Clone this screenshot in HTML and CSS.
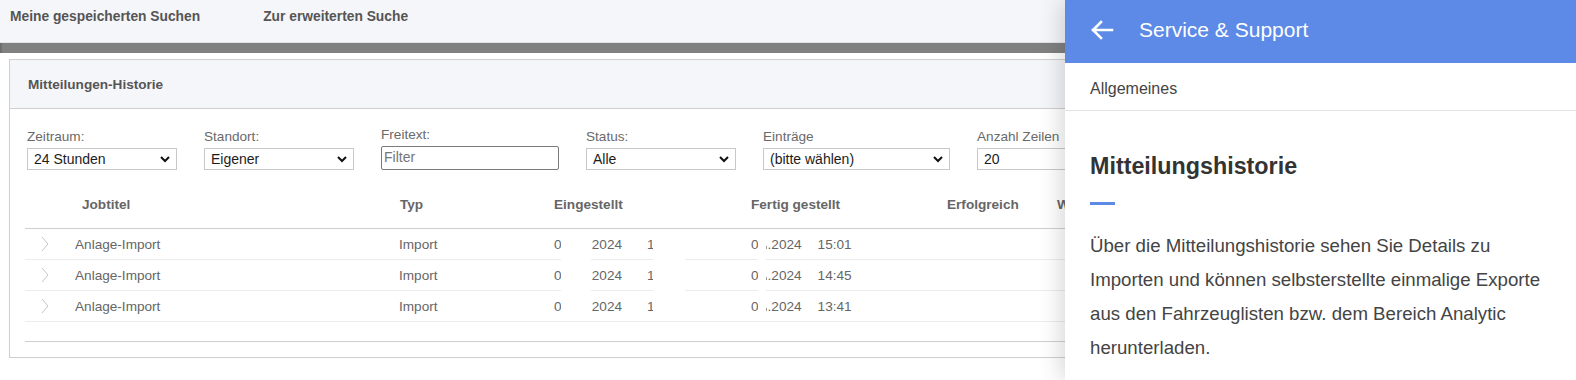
FILE: index.html
```html
<!DOCTYPE html>
<html lang="de">
<head>
<meta charset="utf-8">
<title>Mitteilungen-Historie</title>
<link rel="stylesheet" href="styles.css">
</head>
<body>
<div class="page">
  <nav class="topnav">
    <a class="navlink">Meine gespeicherten Suchen</a>
    <a class="navlink">Zur erweiterten Suche</a>
  </nav>
  <div class="graybar"></div>

  <section class="panel">
    <header class="panel-head">Mitteilungen-Historie</header>
    <div class="filters">
      <div class="field w150">
        <label>Zeitraum:</label>
        <div class="select"><span>24 Stunden</span><svg class="chev" viewBox="0 0 10 7" width="10" height="7"><polyline points="1,1 5,5 9,1" fill="none" stroke="#111" stroke-width="2"/></svg></div>
      </div>
      <div class="field w150">
        <label>Standort:</label>
        <div class="select"><span>Eigener</span><svg class="chev" viewBox="0 0 10 7" width="10" height="7"><polyline points="1,1 5,5 9,1" fill="none" stroke="#111" stroke-width="2"/></svg></div>
      </div>
      <div class="field w178">
        <label>Freitext:</label>
        <div class="input">Filter</div>
      </div>
      <div class="field w150">
        <label>Status:</label>
        <div class="select"><span>Alle</span><svg class="chev" viewBox="0 0 10 7" width="10" height="7"><polyline points="1,1 5,5 9,1" fill="none" stroke="#111" stroke-width="2"/></svg></div>
      </div>
      <div class="field w187">
        <label>Einträge</label>
        <div class="select"><span>(bitte wählen)</span><svg class="chev" viewBox="0 0 10 7" width="10" height="7"><polyline points="1,1 5,5 9,1" fill="none" stroke="#111" stroke-width="2"/></svg></div>
      </div>
      <div class="field w150">
        <label>Anzahl Zeilen</label>
        <div class="select"><span>20</span><svg class="chev" viewBox="0 0 10 7" width="10" height="7"><polyline points="1,1 5,5 9,1" fill="none" stroke="#111" stroke-width="2"/></svg></div>
      </div>
    </div>

    <div class="table-wrap">
      <table class="grid">
        <colgroup>
          <col class="c0"><col class="c1"><col class="c2"><col class="c3"><col class="c4"><col class="c5"><col>
        </colgroup>
        <thead>
          <tr>
            <th></th>
            <th class="pad7">Jobtitel</th>
            <th class="pad1">Typ</th>
            <th>Eingestellt</th>
            <th>Fertig gestellt</th>
            <th>Erfolgreich</th>
            <th>Warnungen</th>
          </tr>
        </thead>
        <tbody>
          <tr>
            <td class="arrow"><svg viewBox="0 0 8 16" width="8" height="16"><polyline points="1,1 7,8 1,15" fill="none" stroke="#c4c4c4" stroke-width="1"/></svg></td>
            <td>Anlage-Import</td>
            <td>Import</td>
            <td>06.05.2024<span class="time">15:00</span></td>
            <td>0<span class="gap"></span><span class="sliver"></span>.2024<span class="time2">15:01</span></td>
            <td></td><td></td>
          </tr>
          <tr>
            <td class="arrow"><svg viewBox="0 0 8 16" width="8" height="16"><polyline points="1,1 7,8 1,15" fill="none" stroke="#c4c4c4" stroke-width="1"/></svg></td>
            <td>Anlage-Import</td>
            <td>Import</td>
            <td>06.05.2024<span class="time">14:44</span></td>
            <td>0<span class="gap"></span><span class="sliver"></span>.2024<span class="time2">14:45</span></td>
            <td></td><td></td>
          </tr>
          <tr>
            <td class="arrow"><svg viewBox="0 0 8 16" width="8" height="16"><polyline points="1,1 7,8 1,15" fill="none" stroke="#c4c4c4" stroke-width="1"/></svg></td>
            <td>Anlage-Import</td>
            <td>Import</td>
            <td>06.05.2024<span class="time">13:40</span></td>
            <td>0<span class="gap"></span><span class="sliver"></span>.2024<span class="time2">13:41</span></td>
            <td></td><td></td>
          </tr>
        </tbody>
      </table>
      <div class="mask m1"></div>
      <div class="mask m2"></div>
      <div class="mask m3"></div>
      <div class="table-foot"></div>
    </div>
  </section>
</div>

<aside class="side">
  <div class="side-head">
    <svg class="back" viewBox="0 0 24 20" width="24" height="20"><path d="M22 10H3M11 2L3 10l8 8" fill="none" stroke="#fff" stroke-width="2.6" stroke-linecap="square"/></svg>
    <span class="side-title">Service &amp; Support</span>
  </div>
  <div class="side-crumb">Allgemeines</div>
  <div class="side-body">
    <h2 class="side-h">Mitteilungshistorie</h2>
    <div class="side-rule"></div>
    <p class="side-p">Über die Mitteilungshistorie sehen Sie Details zu Importen und können selbsterstellte einmalige Exporte aus den Fahrzeuglisten bzw. dem Bereich Analytic herunterladen.</p>
  </div>
</aside>
</body>
</html>
```

FILE: styles.css
```css
* { box-sizing: border-box; }
html, body { margin: 0; padding: 0; }
body {
  width: 1576px;
  height: 380px;
  overflow: hidden;
  background: #fff;
  font-family: "Liberation Sans", Arial, sans-serif;
  color: #666;
  position: relative;
}

.topnav {
  height: 43px;
  background: #f5f6fa;
  border-bottom: 1px solid #e2e3e6;
  display: flex;
  gap: 63px;
  padding: 8px 0 0 10px;
}
.navlink {
  font-size: 13.8px;
  font-weight: bold;
  color: #555;
  line-height: 17px;
}
.graybar {
  height: 10px;
  background: #808080;
  border-left: 2px solid #6e6e6e;
}

.panel {
  margin: 6px 9px 0 9px;
  border: 1px solid #cfcfcf;
  padding-bottom: 15px;
}
.panel-head {
  height: 49px;
  background: #f5f6fa;
  border-bottom: 1px solid #cfcfcf;
  font-size: 13.6px;
  font-weight: bold;
  color: #555;
  line-height: 17px;
  padding: 16px 0 0 18px;
}

.filters {
  display: flex;
  align-items: flex-end;
  gap: 27px;
  padding: 18px 0 0 17px;
}
.field { display: flex; flex-direction: column; }
.field label {
  font-size: 13.6px;
  line-height: 16px;
  color: #6a6a6a;
  margin-bottom: 3px;
}
.w150 { width: 150px; }
.w178 { width: 178px; }
.w187 { width: 187px; }
.select {
  height: 22px;
  border: 1px solid #c9c9c9;
  background: #fff;
  display: flex;
  align-items: center;
  justify-content: space-between;
  padding: 0 6px 0 6px;
  font-size: 14px;
  color: #1c1c1c;
}
.input {
  height: 24px;
  border: 1px solid #7a7a7a;
  border-radius: 2px;
  font-size: 14px;
  color: #757575;
  line-height: 21px;
  padding-left: 2px;
}

.table-wrap {
  position: relative;
  margin: 14px 0 0 15px;
}
.grid {
  border-collapse: collapse;
  table-layout: fixed;
  width: 100%;
}
.c0 { width: 50px; }
.c1 { width: 324px; }
.c2 { width: 155px; }
.c3 { width: 197px; }
.c4 { width: 196px; }
.c5 { width: 110px; }
.grid th {
  text-align: left;
  font-size: 13.6px;
  font-weight: bold;
  color: #666;
  line-height: 17px;
  padding: 12px 0 15px 0;
  border-bottom: 1px solid #cfcfcf;
  white-space: nowrap;
}
.grid th.pad7 { padding-left: 7px; }
.grid th.pad1 { padding-left: 1px; }
.grid td {
  height: 31px;
  padding: 0;
  font-size: 13.6px;
  color: #666;
  border-bottom: 1px solid #ececec;
  vertical-align: middle;
  white-space: nowrap;
}
.grid td.arrow svg { display: block; margin-left: 16px; }
.time { margin-left: 25px; }
.time2 { margin-left: 16px; }
.gap { display: inline-block; width: 7px; }
.sliver {
  display: inline-block;
  width: 1px;
  height: 3px;
  background: #9a9a9a;
  margin-right: 1px;
}

.mask {
  position: absolute;
  top: 45px;
  height: 92px;
  background: #fff;
}
.m1 { left: 536px; width: 30px; }
.m2 { left: 628px; width: 32px; }
.m3 { left: 733px; width: 8px; }

.table-foot {
  height: 20px;
  border-bottom: 1px solid #cfcfcf;
}

.side {
  position: absolute;
  top: 0;
  right: 0;
  width: 511px;
  height: 380px;
  background: #fff;
  box-shadow: -4px 0 22px rgba(0, 0, 0, 0.16);
}
.side-head {
  height: 63px;
  background: #5c8ae6;
  display: flex;
  align-items: center;
  padding: 0 0 4px 25px;
  gap: 25px;
}
.back { display: block; }
.side-title {
  font-size: 21px;
  color: #fff;
  line-height: 24px;
}
.side-crumb {
  height: 48px;
  border-bottom: 1px solid #e2e2e2;
  font-size: 16px;
  color: #444;
  line-height: 18px;
  padding: 17px 0 0 25px;
}
.side-body { padding: 41px 25px 0 25px; }
.side-h {
  margin: 0;
  font-size: 23.3px;
  line-height: 28px;
  font-weight: bold;
  color: #333;
}
.side-rule {
  width: 25px;
  height: 3px;
  background: #5c8ae6;
  margin-top: 22px;
}
.side-p {
  margin: 24px 0 0 0;
  font-size: 18.67px;
  line-height: 34px;
  color: #444;
}
```
